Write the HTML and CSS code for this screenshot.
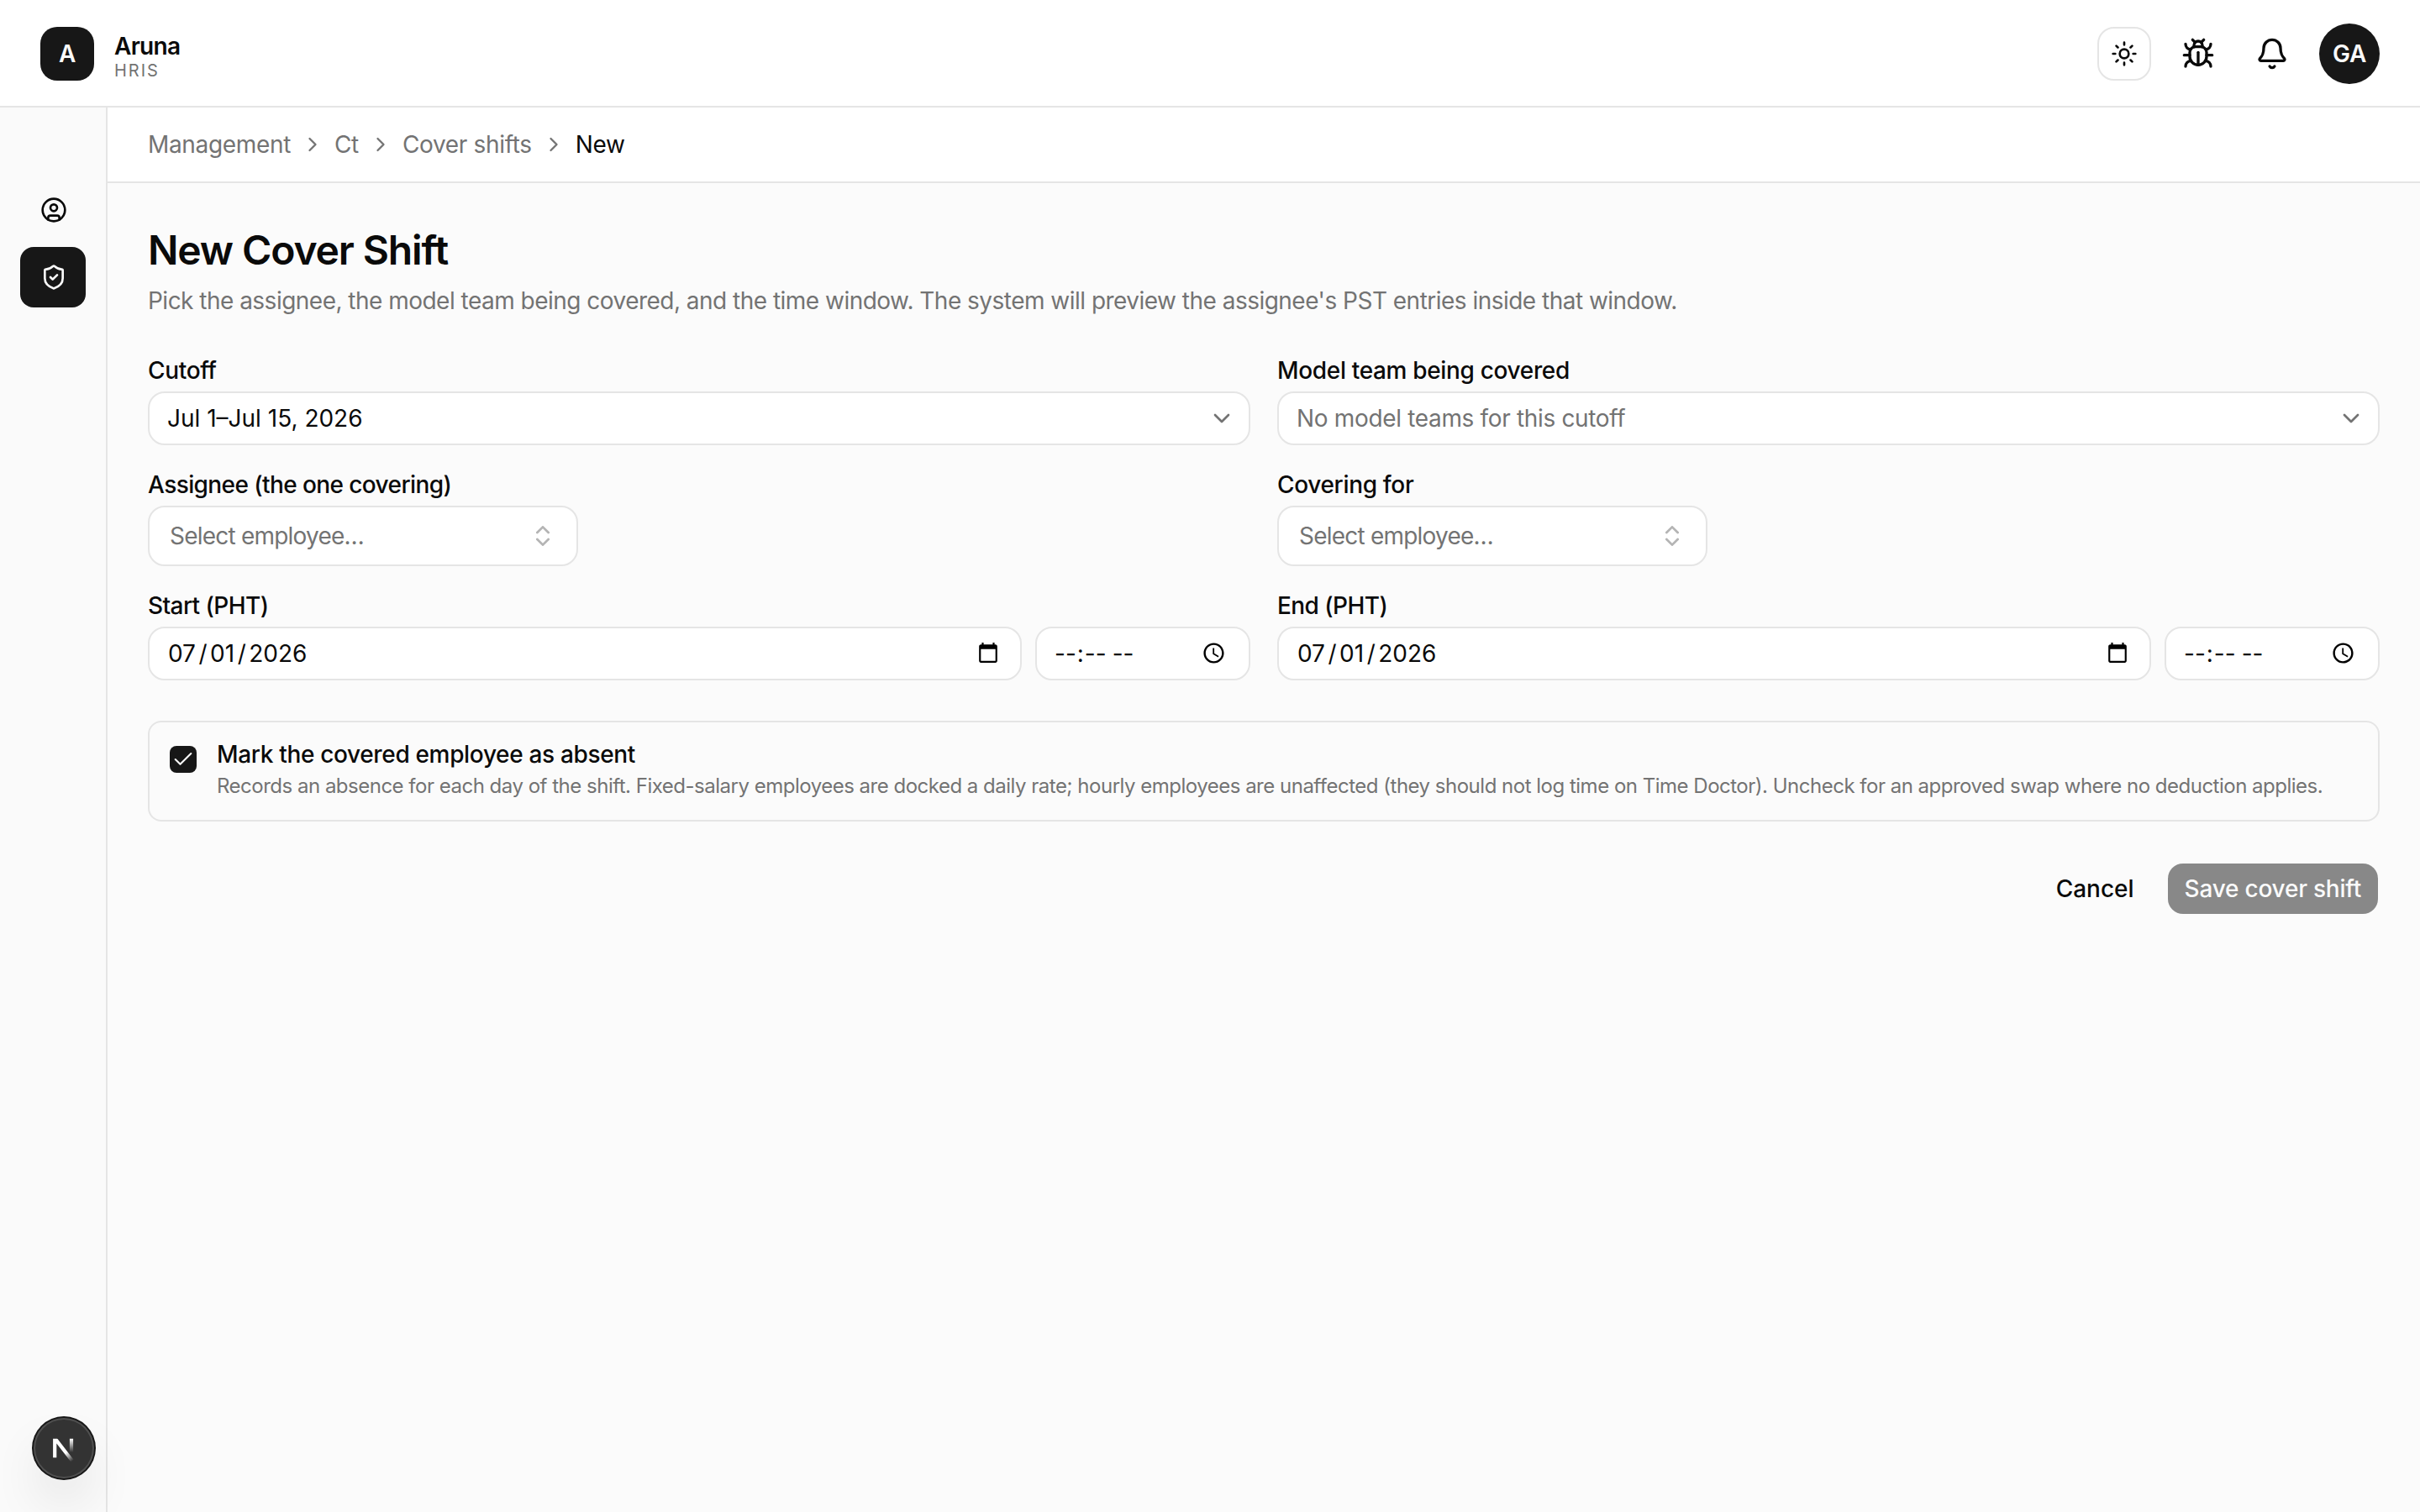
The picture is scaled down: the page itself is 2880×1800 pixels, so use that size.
FILE: index.html
```html
<!DOCTYPE html>
<html lang="en-US">
<head>
    <meta charset="UTF-8">
    <meta name="viewport" content="width=device-width, initial-scale=1.0">
    <title>New Cover Shift - Aruna HRIS</title>
    <link rel="stylesheet" href="styles.css">
</head>
<body>

    <header class="topbar">
        <div class="brand">
            <div class="brand-mark">A</div>
            <div class="brand-text">
                <span class="brand-name">Aruna</span>
                <span class="brand-sub">HRIS</span>
            </div>
        </div>
        <div class="actions">
            <button class="theme-btn" aria-label="Toggle theme">
                <svg class="icon" viewBox="0 0 24 24"><circle cx="12" cy="12" r="4"/><path d="M12 2v2M12 20v2M4.93 4.93l1.41 1.41M17.66 17.66l1.41 1.41M2 12h2M20 12h2M6.34 17.66l-1.41 1.41M19.07 4.93l-1.41 1.41"/></svg>
            </button>
            <button class="icon-btn" aria-label="Report a bug">
                <svg class="icon icon-lg" viewBox="0 0 24 24"><path d="M12 20v-9"/><path d="M14 7a4 4 0 0 1 4 4v3a6 6 0 0 1-12 0v-3a4 4 0 0 1 4-4z"/><path d="M14.12 3.88 16 2"/><path d="M21 21a4 4 0 0 0-3.81-4"/><path d="M21 5a4 4 0 0 1-3.55 3.97"/><path d="M22 13h-4"/><path d="M3 21a4 4 0 0 1 3.81-4"/><path d="M3 5a4 4 0 0 0 3.55 3.97"/><path d="M6 13H2"/><path d="m8 2 1.88 1.88"/><path d="M9 7.13V6a3 3 0 1 1 6 0v1.13"/></svg>
            </button>
            <button class="icon-btn" aria-label="Notifications">
                <svg class="icon icon-lg" viewBox="0 0 24 24"><path d="M10.268 21a2 2 0 0 0 3.464 0"/><path d="M3.262 15.326A1 1 0 0 0 4 17h16a1 1 0 0 0 .74-1.673C19.41 13.956 18 12.499 18 8A6 6 0 0 0 6 8c0 4.499-1.411 5.956-2.738 7.326"/></svg>
            </button>
            <div class="avatar">GA</div>
        </div>
    </header>

    <div class="layout">
        <nav class="sidebar">
            <a href="#" class="nav-item" aria-label="Profile">
                <svg class="icon" viewBox="0 0 24 24"><circle cx="12" cy="12" r="10"/><circle cx="12" cy="10" r="3"/><path d="M7 20.662V19a2 2 0 0 1 2-2h6a2 2 0 0 1 2 2v1.662"/></svg>
            </a>
            <a href="#" class="nav-item active" aria-label="Management">
                <svg class="icon" viewBox="0 0 24 24"><path d="M20 13c0 5-3.5 7.5-7.66 8.95a1 1 0 0 1-.67-.01C7.5 20.5 4 18 4 13V6a1 1 0 0 1 1-1c2 0 4.5-1.2 6.24-2.72a1.17 1.17 0 0 1 1.52 0C14.51 3.81 17 5 19 5a1 1 0 0 1 1 1z"/><path d="m9 12 2 2 4-4"/></svg>
            </a>
        </nav>

        <main class="main">
            <div class="breadcrumb">
                <a href="#">Management</a>
                <svg class="icon icon-sm" viewBox="0 0 24 24"><path d="m9 18 6-6-6-6"/></svg>
                <a href="#">Ct</a>
                <svg class="icon icon-sm" viewBox="0 0 24 24"><path d="m9 18 6-6-6-6"/></svg>
                <a href="#">Cover shifts</a>
                <svg class="icon icon-sm" viewBox="0 0 24 24"><path d="m9 18 6-6-6-6"/></svg>
                <span class="current">New</span>
            </div>

            <div class="content">
                <h1>New Cover Shift</h1>
                <p class="lead">Pick the assignee, the model team being covered, and the time window. The system will preview the assignee's PST entries inside that window.</p>

                <form class="shift-form">
                    <div class="field">
                        <label>Cutoff</label>
                        <div class="select">
                            <span>Jul 1–Jul 15, 2026</span>
                            <svg class="icon" viewBox="0 0 24 24"><path d="m6 9 6 6 6-6"/></svg>
                        </div>
                    </div>
                    <div class="field">
                        <label>Model team being covered</label>
                        <div class="select placeholder">
                            <span>No model teams for this cutoff</span>
                            <svg class="icon" viewBox="0 0 24 24"><path d="m6 9 6 6 6-6"/></svg>
                        </div>
                    </div>

                    <div class="field">
                        <label class="tight">Assignee (the one covering)</label>
                        <div class="combobox">
                            <span>Select employee…</span>
                            <svg class="icon" viewBox="0 0 24 24"><path d="m7 15 5 5 5-5"/><path d="m7 9 5-5 5 5"/></svg>
                        </div>
                    </div>
                    <div class="field">
                        <label>Covering for</label>
                        <div class="combobox">
                            <span>Select employee…</span>
                            <svg class="icon" viewBox="0 0 24 24"><path d="m7 15 5 5 5-5"/><path d="m7 9 5-5 5 5"/></svg>
                        </div>
                    </div>

                    <div class="field">
                        <label class="tight" for="startDate">Start (PHT)</label>
                        <div class="datetime">
                            <input type="date" id="startDate" value="2026-07-01">
                            <input type="time" aria-label="Start time">
                        </div>
                    </div>
                    <div class="field">
                        <label class="tight" for="endDate">End (PHT)</label>
                        <div class="datetime">
                            <input type="date" id="endDate" value="2026-07-01">
                            <input type="time" aria-label="End time">
                        </div>
                    </div>
                </form>

                <div class="absent">
                    <div class="checkbox">
                        <svg class="icon" viewBox="0 0 24 24"><path d="M20 6 9 17l-5-5"/></svg>
                    </div>
                    <div class="absent-text">
                        <div class="absent-title">Mark the covered employee as absent</div>
                        <div class="absent-note">Records an absence for each day of the shift. Fixed-salary employees are docked a daily rate; hourly employees are unaffected (they should not log time on Time Doctor). Uncheck for an approved swap where no deduction applies.</div>
                    </div>
                </div>

                <div class="form-actions">
                    <button class="btn btn-ghost">Cancel</button>
                    <button class="btn btn-primary" disabled>Save cover shift</button>
                </div>
            </div>
        </main>
    </div>

    <div class="dev-badge">
        <svg viewBox="0 0 40 40" fill="none">
            <defs>
                <linearGradient id="diag" x1="23" y1="25" x2="30.5" y2="35" gradientUnits="userSpaceOnUse"><stop stop-color="#fff"/><stop offset="1" stop-color="#fff" stop-opacity="0"/></linearGradient>
                <linearGradient id="stem" x1="29" y1="9" x2="29" y2="25" gradientUnits="userSpaceOnUse"><stop stop-color="#fff"/><stop offset="1" stop-color="#fff" stop-opacity="0"/></linearGradient>
                <clipPath id="top"><rect x="0" y="8.7" width="40" height="31.3"/></clipPath>
            </defs>
            <g clip-path="url(#top)" stroke-width="4.2">
                <path d="M31.1 36.5 9.2 8.1v23.2" stroke="url(#diag)"/>
                <path d="M29 8v18" stroke="url(#stem)"/>
            </g>
        </svg>
    </div>

</body>
</html>
```
FILE: styles.css
```css
* {
    box-sizing: border-box;
}

body {
    font-family: Inter, "Liberation Sans", sans-serif;
    font-size: 28px;
    line-height: 40px;
    letter-spacing: -0.012em;
    margin: 0;
    min-height: 100vh;
    display: flex;
    flex-direction: column;
    background-color: #fbfbfb;
    color: #0a0a0a;
}

a {
    color: inherit;
    text-decoration: none;
}

button {
    font: inherit;
    color: inherit;
    background: none;
    border: none;
    padding: 0;
    cursor: pointer;
}

.icon {
    width: 32px;
    height: 32px;
    flex-shrink: 0;
    display: block;
    fill: none;
    stroke: currentColor;
    stroke-width: 2;
    stroke-linecap: round;
    stroke-linejoin: round;
}

.icon-lg {
    width: 40px;
    height: 40px;
}

.icon-sm {
    width: 28px;
    height: 28px;
}

/* top bar */
.topbar {
    height: 128px;
    padding: 2px 48px 0;
    display: flex;
    align-items: center;
    justify-content: space-between;
    background-color: #fff;
    border-bottom: 2px solid #e5e5e5;
}

.brand,
.actions {
    display: flex;
    align-items: center;
}

.brand {
    gap: 24px;
}

.brand-mark {
    width: 64px;
    height: 64px;
    border-radius: 20px;
    background-color: #171717;
    color: #fafafa;
    font-weight: 600;
    display: flex;
    align-items: center;
    justify-content: center;
}

.brand-text {
    display: flex;
    flex-direction: column;
    align-items: flex-start;
    padding-top: 9px;
}

.brand-name {
    font-weight: 600;
    line-height: 30px;
    letter-spacing: -0.025em;
}

.brand-sub {
    font-size: 20px;
    line-height: 28px;
    letter-spacing: 2px;
    color: #737373;
}

.theme-btn {
    width: 64px;
    height: 64px;
    border: 2px solid #e5e5e5;
    border-radius: 20px;
    display: flex;
    align-items: center;
    justify-content: center;
    margin-right: 20px;
}

.icon-btn {
    width: 72px;
    height: 72px;
    display: flex;
    align-items: center;
    justify-content: center;
    margin-right: 16px;
}

.avatar {
    width: 72px;
    height: 72px;
    margin-left: 4px;
    border-radius: 50%;
    background-color: #171717;
    color: #fafafa;
    font-weight: 600;
    display: flex;
    align-items: center;
    justify-content: center;
}

/* layout */
.layout {
    flex: 1;
    display: flex;
}

.sidebar {
    width: 128px;
    flex-shrink: 0;
    padding: 86px 24px 0;
    border-right: 2px solid #e5e5e5;
    background-color: #fafafa;
    display: flex;
    flex-direction: column;
    gap: 8px;
}

.nav-item {
    height: 72px;
    padding-left: 2px;
    border-radius: 16px;
    display: flex;
    align-items: center;
    justify-content: center;
}

.nav-item.active {
    background-color: #171717;
    color: #fafafa;
}

.main {
    flex: 1;
    min-width: 0;
}

.breadcrumb {
    height: 90px;
    padding: 0 48px;
    display: flex;
    align-items: center;
    gap: 12px;
    background-color: #fff;
    border-bottom: 2px solid #e5e5e5;
    color: #737373;
}

.breadcrumb .current {
    color: #0a0a0a;
}

.content {
    padding: 48px;
}

h1 {
    margin: 0;
    font-size: 48px;
    line-height: 64px;
    font-weight: 600;
    letter-spacing: -0.0235em;
}

.lead {
    margin: 8px 0 0;
    letter-spacing: -0.0185em;
    color: #737373;
}

/* form */
.shift-form {
    margin-top: 48px;
    display: grid;
    grid-template-columns: 1fr 1fr;
    gap: 32px;
}

.field {
    display: flex;
    flex-direction: column;
    gap: 10px;
}

.field label {
    font-weight: 500;
    line-height: 30px;
}

.field .tight {
    letter-spacing: -0.021em;
}

.select,
.combobox,
.datetime input {
    height: 64px;
    border: 2px solid #e5e5e5;
    border-radius: 20px;
    background-color: #fff;
}

.select,
.combobox {
    display: flex;
    align-items: center;
    justify-content: space-between;
}

.select {
    padding: 0 16px 0 21px;
    letter-spacing: 0;
}

.select .icon {
    color: #737373;
}

.placeholder {
    letter-spacing: -0.012em;
    color: #737373;
}

.combobox {
    width: 512px;
    height: 72px;
    padding: 0 24px;
    letter-spacing: -0.028em;
    color: #737373;
}

.combobox .icon {
    color: #0a0a0a;
    opacity: 0.3;
}

.datetime {
    display: flex;
    gap: 16px;
}

.datetime input {
    font: inherit;
    color: inherit;
    min-width: 0;
}

.datetime input[type="date"] {
    flex: 1;
    padding: 0 22px 0 21px;
}

.datetime input[type="date"]::-webkit-datetime-edit-text {
    padding: 0 2.5px;
}

.datetime input[type="time"] {
    width: 256px;
    padding: 0 24px 0 20px;
    letter-spacing: -0.015em;
}

/* absent option */
.absent {
    margin-top: 48px;
    height: 120px;
    padding: 20px 24px;
    border: 2px solid #e5e5e5;
    border-radius: 16px;
    display: flex;
    gap: 24px;
}

.checkbox {
    width: 32px;
    height: 32px;
    flex-shrink: 0;
    margin-top: 8px;
    border-radius: 8px;
    background-color: #171717;
    color: #fafafa;
    display: flex;
    align-items: center;
    justify-content: center;
}

.checkbox .icon {
    width: 28px;
    height: 28px;
    stroke-width: 1.8;
}

.absent-title {
    font-weight: 500;
    line-height: 37px;
}

.absent-note {
    margin-top: 3px;
    font-size: 24px;
    line-height: 32px;
    letter-spacing: -0.0207em;
    color: #737373;
    white-space: nowrap;
}

.form-actions {
    margin-top: 48px;
    display: flex;
    justify-content: flex-end;
    gap: 16px;
}

.btn {
    height: 64px;
    padding: 0 20px;
    border: 2px solid transparent;
    border-radius: 20px;
    background-clip: padding-box;
    font-weight: 500;
}

.btn-primary {
    background-color: #171717;
    color: #fafafa;
    letter-spacing: -0.008em;
    opacity: 0.5;
}

/* dev tools badge */
.dev-badge {
    position: fixed;
    left: 40px;
    bottom: 40px;
    width: 72px;
    height: 72px;
    border-radius: 50%;
    background-color: #333;
    box-shadow: 0 0 0 2px #171717, inset 0 0 0 2px rgba(255, 255, 255, 0.14), 0 32px 64px -16px rgba(0, 0, 0, 0.24);
    display: flex;
    align-items: center;
    justify-content: center;
}

.dev-badge svg {
    width: 40px;
    height: 40px;
}
```
